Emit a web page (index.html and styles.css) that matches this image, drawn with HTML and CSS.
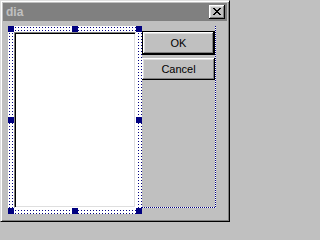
FILE: index.html
```html
<!DOCTYPE html>
<html>
<head>
<meta charset="utf-8">
<link rel="stylesheet" href="styles.css">
</head>
<body>
<div class="window">
  <div class="titlebar">
    <span class="title">dia</span>
    <div class="close">
      <svg class="close-glyph" width="8" height="7" viewBox="0 0 8 7" shape-rendering="crispEdges">
        <path fill="#000" d="M0 0h2v1H0zM6 0h2v1H6zM1 1h2v1H1zM5 1h2v1H5zM2 2h4v1H2zM3 3h2v1H3zM2 4h4v1H2zM1 5h2v1H1zM5 5h2v1H5zM0 6h2v1H0zM6 6h2v1H6z"/>
      </svg>
    </div>
  </div>
  <div class="client">
    <div class="dlg">
      <div class="sel">
        <div class="listbox"></div>
        <span class="h h-tl"></span>
        <span class="h h-tm"></span>
        <span class="h h-tr"></span>
        <span class="h h-ml"></span>
        <span class="h h-mr"></span>
        <span class="h h-bl"></span>
        <span class="h h-bm"></span>
        <span class="h h-br"></span>
      </div>
      <div class="buttons">
        <div class="btn btn-default">OK</div>
        <div class="btn">Cancel</div>
      </div>
    </div>
  </div>
</div>
</body>
</html>
```

FILE: styles.css
```css
html, body {
  margin: 0;
  padding: 0;
}
body {
  width: 230px;
  height: 222px;
  overflow: hidden;
  background: #c0c0c0;
  font-family: "Liberation Sans", Arial, sans-serif;
}
.window {
  box-sizing: border-box;
  width: 230px;
  height: 222px;
  background: #c0c0c0;
  border: 1px solid;
  border-color: #dfdfdf #000 #000 #dfdfdf;
  box-shadow: inset 1px 1px #fff, inset -1px -1px #808080;
  padding: 2px;
  display: flex;
  flex-direction: column;
}
.titlebar {
  height: 18px;
  flex: none;
  background: #808080;
  display: flex;
  align-items: center;
  padding: 0 2px 0 3px;
}
.title {
  flex: 1;
  color: #c0c0c0;
  font-weight: bold;
  font-size: 12px;
  line-height: 14px;
}
.close {
  box-sizing: border-box;
  width: 16px;
  height: 14px;
  padding: 3px 0 0 4px;
  background: #c0c0c0;
  box-shadow: inset -1px -1px #000, inset 1px 1px #fff, inset -2px -2px #808080, inset 2px 2px #dfdfdf;
}
.close-glyph {
  display: block;
}
.client {
  flex: 1;
  padding: 5px 0 0 5px;
}
.dlg {
  width: 208px;
  height: 182px;
  display: flex;
  align-items: flex-start;
  background-image:
    repeating-linear-gradient(to bottom, #000080 0 1px, #fff 1px 2px),
    repeating-linear-gradient(to right, #000080 0 1px, #fff 1px 2px);
  background-size: 1px 100%, 100% 1px;
  background-position: right top, left bottom;
  background-repeat: no-repeat;
}
.sel {
  position: relative;
  flex: none;
  box-sizing: border-box;
  width: 134px;
  height: 188px;
  padding: 6px;
  background-color: #000080;
  background-image:
    linear-gradient(to bottom, #fff 1px, transparent 1px, transparent 2px, #fff 2px),
    linear-gradient(to right, #fff 1px, transparent 1px, transparent 2px, #fff 2px);
  background-size: 3px 3px;
}
.listbox {
  box-sizing: border-box;
  width: 122px;
  height: 176px;
  background: #fff;
  border: 1px solid;
  border-color: #808080 #fff #fff #808080;
  box-shadow: inset 1px 1px #000, inset -1px -1px #dfdfdf;
}
.h {
  position: absolute;
  width: 6px;
  height: 6px;
  background: #000080;
}
.h-tl { left: 0; top: 0; }
.h-tm { left: 64px; top: 0; }
.h-tr { right: 0; top: 0; }
.h-ml { left: 0; top: 91px; }
.h-mr { right: 0; top: 91px; }
.h-bl { left: 0; bottom: 0; }
.h-bm { left: 64px; bottom: 0; }
.h-br { right: 0; bottom: 0; }
.buttons {
  display: flex;
  flex-direction: column;
  gap: 3px;
  margin-top: 5px;
}
.btn {
  box-sizing: border-box;
  width: 73px;
  height: 22px;
  display: flex;
  align-items: center;
  justify-content: center;
  font-size: 11px;
  color: #000;
  background: #c0c0c0;
  box-shadow: inset -1px -1px #000, inset 1px 1px #fff, inset -2px -2px #808080, inset 2px 2px #dfdfdf;
}
.btn-default {
  height: 24px;
  border: 1px solid #000;
}
```
